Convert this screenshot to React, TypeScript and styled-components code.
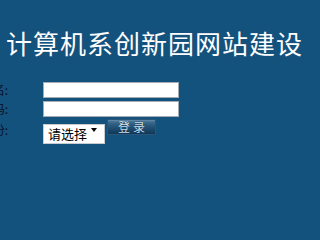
import React from "react";
import styled, { createGlobalStyle } from "styled-components";

const Global = createGlobalStyle`
  html, body {
    margin: 0;
    padding: 0;
    background: #14527e;
    overflow: hidden;
  }
  body {
    font-family: "Noto Sans CJK SC", "Liberation Sans", sans-serif;
  }
`;

const Page = styled.div`
  width: 300px;
  height: 200px;
  background: #14527e;
`;

const Title = styled.h1`
  margin: 0;
  padding: 30px 0 0 6px;
  font-family: "Noto Sans CJK SC", sans-serif;
  font-size: 26px;
  line-height: 26px;
  font-weight: 400;
  letter-spacing: 1px;
  color: #ffffff;
  white-space: nowrap;
`;

const Form = styled.form`
  margin-top: 26px;
  display: flex;
  flex-direction: column;
  gap: 3px;
`;

const Row = styled.div`
  display: flex;
  align-items: center;
`;

const LabelCell = styled.div`
  width: 8px;
  margin-right: 35px;
  display: flex;
  justify-content: flex-end;
`;

const Label = styled.label`
  font-size: 12px;
  line-height: 14px;
  color: #0a0f1a;
  white-space: nowrap;
`;

const TextInput = styled.input`
  box-sizing: border-box;
  width: 136px;
  height: 16px;
  margin: 0;
  padding: 0 2px;
  border: 1px solid #a4abb3;
  background: #ffffff;
  outline: none;
`;

const SelectWrap = styled.div`
  position: relative;
  width: 62px;
  height: 20px;
`;

const Select = styled.select`
  box-sizing: border-box;
  width: 62px;
  height: 20px;
  margin: 0;
  padding: 0 0 0 4px;
  appearance: none;
  border: 1px solid #c8ccd0;
  border-radius: 0;
  background: #ffffff;
  font-family: "Noto Sans CJK SC", sans-serif;
  font-size: 13px;
  line-height: 18px;
  color: #000;
  outline: none;
`;

const Arrow = styled.span`
  position: absolute;
  right: 8px;
  top: 8px;
  width: 0;
  height: 0;
  border-left: 3px solid transparent;
  border-right: 3px solid transparent;
  border-top: 4px solid #000;
  pointer-events: none;
`;

const Button = styled.button`
  box-sizing: border-box;
  width: 49px;
  height: 16px;
  margin: -1px 0 0 2px;
  padding: 0;
  align-self: flex-start;
  border: 1px solid #2a5576;
  border-radius: 1px;
  background: linear-gradient(to bottom, #6f95b0 0px, #4a7696 1px, #2f5f82 4px, #1a4668 10px, #10385a 100%);
  color: #cfdde8;
  font-family: "Noto Sans CJK SC", sans-serif;
  font-size: 12px;
  line-height: 14px;
  letter-spacing: 3px;
  text-indent: 3px;
  text-shadow: 0 0 1px #0a2a44;
`;

export default function App() {
  return (
    <Page>
      <Global />
      <Title>计算机系创新园网站建设</Title>
      <Form onSubmit={(e) => e.preventDefault()}>
        <Row>
          <LabelCell>
            <Label>用户名:</Label>
          </LabelCell>
          <TextInput type="text" />
        </Row>
        <Row>
          <LabelCell>
            <Label>密　码:</Label>
          </LabelCell>
          <TextInput type="password" />
        </Row>
        <Row>
          <LabelCell>
            <Label>身　份:</Label>
          </LabelCell>
          <SelectWrap>
            <Select defaultValue="">
              <option value="">请选择</option>
              <option value="student">学生</option>
              <option value="teacher">教师</option>
            </Select>
            <Arrow />
          </SelectWrap>
          <Button type="submit">登录</Button>
        </Row>
      </Form>
    </Page>
  );
}
